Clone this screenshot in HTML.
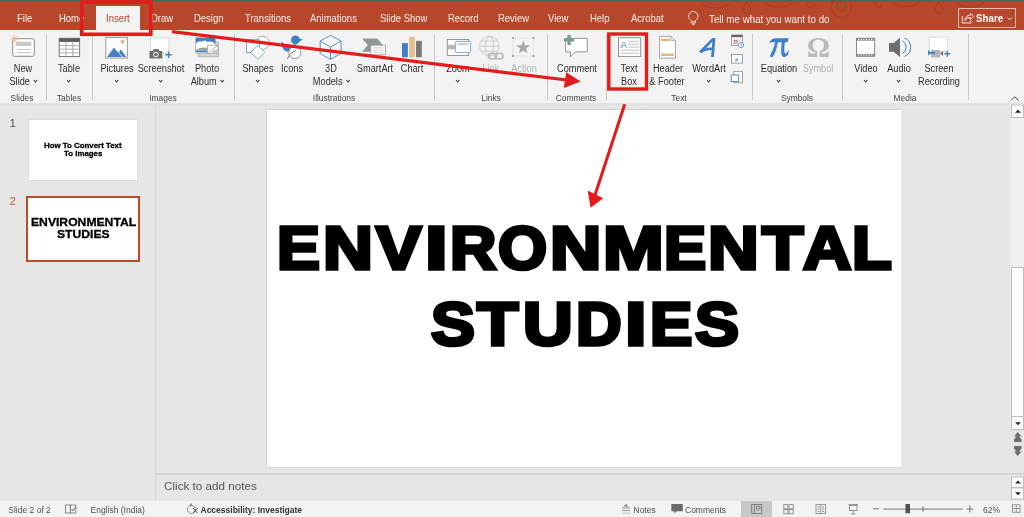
<!DOCTYPE html>
<html><head><meta charset="utf-8">
<style>
*{margin:0;padding:0;box-sizing:border-box}
html,body{width:1024px;height:517px;overflow:hidden;-webkit-font-smoothing:antialiased;background:#e6e6e6;font-family:"Liberation Sans",sans-serif}
.a{position:absolute}
#green{left:0;top:0;width:1024px;height:2px;background:#44714d}
#title{left:0;top:2px;width:1024px;height:28px;background:#b7472a}
.tab{position:absolute;top:14px;font-size:10.2px;color:#fbeee9;white-space:nowrap;line-height:10px;transform:scaleX(0.93);transform-origin:0 0}
#ribbon{left:0;top:30px;width:1024px;height:73px;background:#f3f3f3}
#rbline{left:0;top:103px;width:1024px;height:2px;background:#e1e1e1}
.lbl{position:absolute;width:100px;font-size:10px;transform:scaleX(0.92);transform-origin:50% 0;color:#2c2c2c;white-space:nowrap;line-height:12px;text-align:center}
.grp{position:absolute;top:92.5px;width:100px;text-align:center;font-size:9px;transform:scaleX(0.93);transform-origin:50% 0;color:#444;white-space:nowrap;line-height:10px}
.sep{position:absolute;top:34px;width:1px;height:66px;background:#c9c9c9}
.dis{color:#b0b0b0}
.ch{display:inline-block;width:3.2px;height:3.2px;border-right:1px solid #2c2c2c;border-bottom:1px solid #2c2c2c;transform:rotate(45deg);margin-left:4px;position:relative;top:-3px}
.chonly .ch{margin-left:0}
#panelsep{left:155px;top:105px;width:1px;height:396px;background:#d8d8d8}
.bl{position:absolute;font-family:"Liberation Sans",sans-serif;font-weight:bold;font-size:60px;line-height:80px;color:#000;-webkit-text-stroke:3.5px #000;transform-origin:0 0;white-space:nowrap}
.tl{font-weight:bold;color:#000;white-space:nowrap;transform-origin:0 0;-webkit-text-stroke:0.3px #000}
.thumb{position:absolute;background:#fff;text-align:center;font-weight:bold;color:#000}
#slide{left:267px;top:110px;width:634px;height:357px;background:#fff;box-shadow:-1px -1px 0 #d2d2d2,0 1px 0 #d8d8d8}
#notesline{left:156px;top:473px;width:868px;height:2px;background:#d4d4d4}
#status{left:0;top:501px;width:1024px;height:16px;background:#f3f3f3}
.st{position:absolute;top:504.8px;font-size:8.5px;color:#505050;white-space:nowrap;line-height:10px}
</style></head><body><div style="position:absolute;left:0;top:0;width:1024px;height:517px;will-change:transform">
<div id="green" class="a"></div>
<div id="title" class="a"></div>
<!-- tabs -->
<div class="tab" style="left:17px">File</div>
<div class="tab" style="left:59px">Home</div>
<div class="a" style="left:96px;top:6px;width:44px;height:24px;background:#f3f3f3"></div>
<div class="tab" style="left:105.5px;color:#b7472a">Insert</div>
<div class="tab" style="left:151px">Draw</div>
<div class="tab" style="left:194px">Design</div>
<div class="tab" style="left:245px">Transitions</div>
<div class="tab" style="left:310px">Animations</div>
<div class="tab" style="left:380px">Slide Show</div>
<div class="tab" style="left:447.5px">Record</div>
<div class="tab" style="left:498px">Review</div>
<div class="tab" style="left:548px">View</div>
<div class="tab" style="left:589.5px">Help</div>
<div class="tab" style="left:630.5px">Acrobat</div>
<div class="tab" style="left:708.5px;font-size:10.5px">Tell me what you want to do</div>
<!-- share -->
<div class="a" style="left:958px;top:8px;width:58px;height:20px;border:1px solid #e9b9ab"></div>
<div class="tab" style="left:975.5px;font-weight:bold;font-size:10.5px;color:#fff;top:12.5px;transform:scaleX(0.93);transform-origin:0 0">Share</div>

<div id="ribbon" class="a"></div>
<div id="rbline" class="a"></div>

<svg class="a" style="left:0;top:0;z-index:5" width="1024" height="110" viewBox="0 0 1024 110">
<!-- New slide -->
<rect x="12.7" y="38.7" width="21.6" height="17.6" rx="2" fill="#fff" stroke="#8a8a8a" stroke-width="1"/>
<rect x="15.7" y="41.7" width="15.6" height="4.3" fill="#c8c8c8"/>
<line x1="17" y1="49.5" x2="31" y2="49.5" stroke="#c8c8c8" stroke-width="1"/>
<line x1="17" y1="52.5" x2="31" y2="52.5" stroke="#c8c8c8" stroke-width="1"/>
<g stroke="#f0b98a" stroke-width="0.8"><line x1="14.2" y1="34.6" x2="14.2" y2="37.4"/><line x1="14.2" y1="40.6" x2="14.2" y2="43.4"/><line x1="9.8" y1="39" x2="12.6" y2="39"/><line x1="15.8" y1="39" x2="18.6" y2="39"/><line x1="11.1" y1="35.9" x2="13" y2="37.8"/><line x1="15.4" y1="40.2" x2="17.3" y2="42.1"/><line x1="17.3" y1="35.9" x2="15.4" y2="37.8"/><line x1="13" y1="40.2" x2="11.1" y2="42.1"/></g>
<circle cx="14.2" cy="39" r="1.6" fill="none" stroke="#f0b98a" stroke-width="0.8"/>
<!-- Table -->
<rect x="59.2" y="38.3" width="20.4" height="18.2" fill="#fff" stroke="#7a7a7a" stroke-width="1"/>
<rect x="59.2" y="38.3" width="20.4" height="3.6" fill="#5a5a5a"/>
<g stroke="#9a9a9a" stroke-width="0.8"><line x1="66" y1="42" x2="66" y2="56.5"/><line x1="72.8" y1="42" x2="72.8" y2="56.5"/><line x1="59.2" y1="45.6" x2="79.6" y2="45.6"/><line x1="59.2" y1="49.2" x2="79.6" y2="49.2"/><line x1="59.2" y1="52.8" x2="79.6" y2="52.8"/></g>
<!-- Pictures -->
<rect x="105.8" y="37.5" width="21.6" height="20.6" fill="#fff" stroke="#9a9a9a" stroke-width="1"/>
<path d="M107 57 L114 47.5 L118.5 52.5 L121 49.5 L126.3 57 Z" fill="#4a80bf"/>
<path d="M115.5 49 L122.5 57" stroke="#fff" stroke-width="0.8"/>
<circle cx="122.6" cy="41.7" r="1.9" fill="#e8b27c"/>
<!-- Screenshot -->
<rect x="150.6" y="37.9" width="18.2" height="15" fill="#fff" stroke="#a8a8a8" stroke-width="0.8" stroke-dasharray="1 1"/>
<path d="M149.5 51 h3 l1.2 -2 h4.6 l1.2 2 h2.8 v7.6 h-12.8 Z" fill="#6e6e6e"/>
<circle cx="155.9" cy="54.6" r="2.3" fill="none" stroke="#fff" stroke-width="1"/>
<path d="M168.6 51.5 v6.5 M165.4 54.8 h6.5" stroke="#3f7fc6" stroke-width="1.4"/>
<!-- Photo Album -->
<rect x="198.3" y="42" width="20.2" height="14.8" fill="#d4d4d4" stroke="#ababab" stroke-width="0.8"/>
<rect x="195.6" y="37.6" width="19.8" height="15.4" fill="#fff" stroke="#a8a8a8" stroke-width="0.8"/>
<rect x="196" y="38" width="19" height="6.8" fill="#3f7fc6"/>
<ellipse cx="199.8" cy="43.4" rx="3" ry="2.2" fill="#fff"/><ellipse cx="204.4" cy="42.6" rx="2.6" ry="2" fill="#fff"/><ellipse cx="209.5" cy="43.6" rx="4.5" ry="2" fill="#fff"/><rect x="196" y="43.5" width="19" height="3" fill="#fff"/>
<path d="M196 49.8 Q202 46.2 208 48 L208 50.6 L196 50.6 Z" fill="#9aa6a2"/>
<rect x="196" y="50.6" width="11.8" height="1.6" fill="#3f7fc6"/>
<rect x="207.6" y="45.2" width="10.4" height="8.4" fill="#fff" stroke="#a8a8a8" stroke-width="0.8"/>
<path d="M210.5 53.4 Q214 49.5 217.6 49.6 V53.4 Z" fill="#c4c4c4"/>
<path d="M208.2 53.3 L217.6 45.6" stroke="#8a8a8a" stroke-width="0.7"/>
<!-- Shapes -->
<circle cx="262.6" cy="42.8" r="6.6" fill="#fff" stroke="#a0a0a0" stroke-width="0.9"/>
<rect x="246.5" y="39.7" width="13" height="12.8" fill="#fff" stroke="#6e9fd6" stroke-width="0.9"/>
<path d="M257.7 45.3 L264.7 52.3 L257.7 59.3 L250.7 52.3 Z" fill="#fff" stroke="#6e9fd6" stroke-width="0.9"/>
<!-- Icons -->
<circle cx="295.4" cy="39.8" r="4.4" fill="#3f7fc6"/>
<path d="M298.5 38.5 L303 39.5 L298.5 42 Z" fill="#3f7fc6"/>
<path d="M281.5 41.5 Q281.5 51.5 288 51.8 Q294 51.5 296 44 Q292 45.5 288 45 Q284 44.5 281.5 41.5 Z" fill="#3f7fc6"/>
<circle cx="294.8" cy="52.6" r="6.1" fill="#fff" stroke="#8a8a8a" stroke-width="0.9"/>
<path d="M287.3 58.8 Q290 52.5 296 50.2" fill="none" stroke="#6a6a6a" stroke-width="0.9"/>
<!-- 3D Models -->
<path d="M330.5 35.3 L341 41 L341 53.5 L330.5 59.3 L320.2 53.5 L320.2 41 Z" fill="#f7f9f9" stroke="#4a80bf" stroke-width="0.9"/>
<path d="M320.2 41 L330.5 47 L341 41 M330.5 47 L330.5 59.3" fill="none" stroke="#4a80bf" stroke-width="0.9"/>
<!-- SmartArt -->
<path d="M362.2 38.4 h15 l5.6 6.6 l-5.6 6.7 h-15 l5.6 -6.7 Z" fill="#8f9896"/>
<rect x="370.8" y="45.2" width="14.6" height="9.6" fill="#fff" stroke="#9a9a9a" stroke-width="0.8"/>
<g stroke="#c4c4c4" stroke-width="0.8"><line x1="373" y1="47.8" x2="383.5" y2="47.8"/><line x1="373" y1="50.2" x2="383.5" y2="50.2"/><line x1="373" y1="52.6" x2="383.5" y2="52.6"/></g>
<!-- Chart -->
<rect x="402" y="43.1" width="5.9" height="14.2" fill="#3f7fc6"/>
<rect x="409" y="36.9" width="5.9" height="20.4" fill="#ebbd8e"/>
<rect x="416" y="40.9" width="5.8" height="16.4" fill="#7b7b7b"/>
<!-- Zoom -->
<rect x="447.3" y="39.5" width="21.3" height="16" fill="#fff" stroke="#8a8a8a" stroke-width="0.9"/>
<rect x="448" y="44.8" width="7.5" height="4.5" fill="#b9b9b9"/>
<rect x="455.3" y="41.4" width="15.3" height="11.2" rx="1.2" fill="#fff" stroke="#6e9fd6" stroke-width="0.9"/>
<rect x="457.5" y="43.2" width="11" height="1.8" fill="#c8c8c8"/>
<!-- Link -->
<g fill="none" stroke="#c4c4c4" stroke-width="0.8"><circle cx="489.3" cy="46.1" r="9.8"/><ellipse cx="489.3" cy="46.1" rx="4.2" ry="9.8"/><line x1="479.5" y1="46.1" x2="499.1" y2="46.1"/><line x1="481" y1="41" x2="497.6" y2="41"/><line x1="481" y1="51.2" x2="497.6" y2="51.2"/></g>
<g fill="none" stroke="#bdbdbd" stroke-width="1.8"><rect x="488.5" y="53.3" width="8" height="5.5" rx="2.7"/><rect x="495" y="53.3" width="8" height="5.5" rx="2.7"/></g>
<!-- Action -->
<rect x="513" y="38" width="20.4" height="18" fill="none" stroke="#b8b8b8" stroke-width="0.6" stroke-dasharray="1 1"/>
<g fill="#a8a8a8"><rect x="512" y="37" width="2" height="2"/><rect x="532.5" y="37" width="2" height="2"/><rect x="512" y="55" width="2" height="2"/><rect x="532.5" y="55" width="2" height="2"/></g>
<path d="M523.2 40.3 L525 45.2 L530.2 45.3 L526.1 48.5 L527.5 53.5 L523.2 50.6 L518.9 53.5 L520.3 48.5 L516.2 45.3 L521.4 45.2 Z" fill="#a8a8a8"/>
<!-- Comment -->
<path d="M565.6 38.4 h21.6 v13.5 h-12 l-4.7 5 v-5 h-4.9 Z" fill="#fff" stroke="#8a8a8a" stroke-width="0.9" stroke-linejoin="round"/>
<path d="M569.1 34.8 v10.2 M564 39.9 h10.2" stroke="#7f9a96" stroke-width="3.4"/>
<!-- Text Box -->
<rect x="618.5" y="37.8" width="22.2" height="18.6" fill="#fff" stroke="#8a8a8a" stroke-width="0.9"/>
<text x="620.5" y="47.8" font-family="Liberation Sans" font-size="9.8" fill="#3f7fc6">A</text>
<g stroke="#b0b0b0" stroke-width="0.8"><line x1="628" y1="41.3" x2="639" y2="41.3"/><line x1="628" y1="44.2" x2="639" y2="44.2"/><line x1="628" y1="47.1" x2="639" y2="47.1"/><line x1="620.5" y1="50.2" x2="639" y2="50.2"/><line x1="620.5" y1="53.2" x2="639" y2="53.2"/></g>
<!-- Header Footer -->
<path d="M659.6 36.4 h11.5 l4.3 4.3 v17.5 h-15.8 Z" fill="#fff" stroke="#9a9a9a" stroke-width="0.9"/>
<path d="M671.1 36.4 v4.3 h4.3" fill="none" stroke="#9a9a9a" stroke-width="0.8"/>
<rect x="661" y="38.8" width="9" height="2.3" fill="#e8b27c"/>
<rect x="661" y="53.6" width="13" height="2.3" fill="#e8b27c"/>
<!-- WordArt -->
<path d="M712.2 38 L715.4 38.2 L701.8 53 L699 51.4 Z" fill="#3f7fc6"/>
<path d="M699.2 51.3 Q706 46.8 714.2 47.8 L714 50 Q706.5 49.4 701 53.2 Z" fill="#3f7fc6"/>
<path d="M712.6 38 L715.4 38 L713.9 57 L711.1 57 Z" fill="#3f7fc6"/>
<!-- small text icons -->
<rect x="731.5" y="35" width="11" height="10.5" fill="#fff" stroke="#8a8a8a" stroke-width="0.8"/>
<rect x="731.5" y="35" width="11" height="2.2" fill="#666"/>
<g stroke="#cfcfcf" stroke-width="0.5"><line x1="734.2" y1="37.5" x2="734.2" y2="45.5"/><line x1="737" y1="37.5" x2="737" y2="45.5"/><line x1="739.8" y1="37.5" x2="739.8" y2="42"/><line x1="731.5" y1="40.3" x2="742.5" y2="40.3"/><line x1="731.5" y1="43" x2="738" y2="43"/></g><rect x="734.2" y="40.3" width="2.8" height="2.7" fill="none" stroke="#e05050" stroke-width="0.8"/>
<circle cx="741" cy="45" r="2.6" fill="#fff" stroke="#3f7fc6" stroke-width="0.8"/><path d="M741 43.6 v1.5 h1.2" fill="none" stroke="#555" stroke-width="0.6"/>
<rect x="731.5" y="54.5" width="11" height="8.6" fill="#fff" stroke="#8a8a8a" stroke-width="0.8"/>
<text x="735" y="61.5" font-family="Liberation Sans" font-size="6" fill="#3f7fc6">#</text>
<rect x="734" y="71.3" width="8.5" height="11.5" fill="#fff" stroke="#8a8a8a" stroke-width="0.8"/>
<rect x="731.2" y="75" width="7.5" height="6.5" fill="#fff" stroke="#3f7fc6" stroke-width="0.9"/>
<!-- Equation / Symbol -->
<path d="M769.2 43.2 Q770.8 38.3 776 38.3 L788.6 38.3 L787.6 42.2 L772 42.2 Q770.5 42.2 769.2 43.2 Z" fill="#3f7fc6"/>
<path d="M775.2 42 L778 42 Q776.6 50 773.4 56.2 Q772 57.6 770.6 56.9 Q769.6 56 770.8 54 Q774 48.5 775.2 42 Z" fill="#3f7fc6"/>
<path d="M781.8 42 L784.8 42 Q784 48 784.4 52 Q784.8 54.2 786.4 53.4 Q787.6 52.4 788.2 50.6 L788.8 51 Q788.2 56.8 784.2 57.1 Q781.2 57.1 781.2 52 Q781.2 47 781.8 42 Z" fill="#3f7fc6"/>
<text x="806.8" y="56.6" font-family="Liberation Serif" font-size="30" font-weight="bold" fill="#b9b9b9" transform="translate(806.8 0) scale(0.97 1) translate(-806.8 0)">Ω</text>
<!-- Video -->
<rect x="856.5" y="38.3" width="18.2" height="18" fill="#fff" stroke="#7a7a7a" stroke-width="0.9"/>
<rect x="856.5" y="38.3" width="18.2" height="2.4" fill="#8a8a8a"/>
<rect x="856.5" y="53.9" width="18.2" height="2.4" fill="#8a8a8a"/>
<g fill="#fff"><rect x="858" y="39.1" width="1.2" height="1"/><rect x="860.6" y="39.1" width="1.2" height="1"/><rect x="863.2" y="39.1" width="1.2" height="1"/><rect x="865.8" y="39.1" width="1.2" height="1"/><rect x="868.4" y="39.1" width="1.2" height="1"/><rect x="871" y="39.1" width="1.2" height="1"/><rect x="858" y="54.5" width="1.2" height="1"/><rect x="860.6" y="54.5" width="1.2" height="1"/><rect x="863.2" y="54.5" width="1.2" height="1"/><rect x="865.8" y="54.5" width="1.2" height="1"/><rect x="868.4" y="54.5" width="1.2" height="1"/><rect x="871" y="54.5" width="1.2" height="1"/></g>
<!-- Audio -->
<path d="M889 43 h4.5 l6.5 -5.3 v19.4 l-6.5 -5.3 h-4.5 Z" fill="#6e6e6e"/>
<path d="M902.3 40.8 A7.2 7.2 0 0 1 902.3 53.6 M904.6 38 A10 10 0 0 1 904.6 56.4" fill="none" stroke="#3f7fc6" stroke-width="1"/>
<!-- Screen Recording -->
<rect x="929.3" y="37.2" width="18" height="14.5" fill="#fff" stroke="#a8a8a8" stroke-width="0.7" stroke-dasharray="1 1"/>
<rect x="931" y="50" width="9" height="7.4" fill="#b5b5b5"/>
<path d="M940 53.5 l3 -2.5 v5 Z" fill="#6e6e6e"/>
<rect x="928" y="51.8" width="7" height="2" fill="#3f7fc6"/><rect x="928" y="50.5" width="1.3" height="4.6" fill="#3f7fc6"/>
<path d="M947.3 50.8 v6 M944.3 53.8 h6" stroke="#3f7fc6" stroke-width="1.4"/>
<!-- collapse ribbon -->
<path d="M1011 100.5 L1014.8 96.7 L1018.6 100.5" fill="none" stroke="#444" stroke-width="1"/>
<!-- lightbulb -->
<path d="M691.4 20.8 C689.6 19.4 688.6 17.8 688.6 16.2 A4.7 4.7 0 0 1 698 16.2 C698 17.8 697 19.4 695.2 20.8 V23.1 H691.4 Z" fill="none" stroke="#fbeee9" stroke-width="0.9"/>
<line x1="691.4" y1="21.6" x2="695.2" y2="21.6" stroke="#fbeee9" stroke-width="0.7"/>
<line x1="692.2" y1="24.6" x2="694.4" y2="24.6" stroke="#fbeee9" stroke-width="0.9"/>
<!-- share icon -->
<path d="M962.3 16 v7 h8.6 v-2.5" fill="none" stroke="#fff" stroke-width="0.9"/>
<path d="M964.8 20.5 q0.5 -5 5.5 -5.2 v-2.2 l3.2 3.2 l-3.2 3.2 v-2 q-3.5 0 -5.5 3 Z" fill="none" stroke="#fff" stroke-width="0.9" stroke-linejoin="round"/>
<path d="M1007.5 17.5 l2.3 2.3 l2.3 -2.3" fill="none" stroke="#fff" stroke-width="0.9"/>
</svg>
<svg class="a" style="left:0;top:0;z-index:1" width="1024" height="30" viewBox="0 0 1024 30">
<g fill="none" stroke="#9c3a22" stroke-width="1" opacity="0.75">
<path d="M701 3 a14 5 0 0 0 28 0"/>
<path d="M747 2 q-5 6 -4 8 a4 3 0 0 0 8 0 q0 -3 -4 -8"/>
<path d="M765 2 a14 5 0 0 0 28 0"/>
<path d="M806 3 q1 5 5 5 q3 0 4 -3"/>
<circle cx="841.5" cy="7.5" r="10"/>
<circle cx="841.5" cy="6" r="5"/>
<path d="M830 3 q2 -3 6 -2"/>
<path d="M875 3 q1 5 4 5 q2 0 2 -3"/>
<path d="M892 1 a13.5 5.5 0 0 0 27 0"/>
<path d="M939 2 q-5 6 -4 8 a4 3 0 0 0 8 0 q0 -3 -4 -8"/>
<path d="M956 1 a14 6 0 0 0 28 0"/>
</g>
</svg>
<svg class="a" style="left:0;top:100px;z-index:4" width="1024" height="417" viewBox="0 100 1024 417">
<!-- vertical scrollbar -->
<rect x="1010.5" y="104" width="13.5" height="326" fill="#f0f0f0"/>
<rect x="1011.5" y="105" width="12" height="12.5" fill="#fff" stroke="#b9bfbf" stroke-width="1"/>
<path d="M1015 112.8 L1018 109.6 L1021 112.8 Z" fill="#222"/>
<rect x="1011.5" y="267.5" width="12" height="149" fill="#fff" stroke="#b9bfbf" stroke-width="1"/>
<rect x="1011.5" y="416.5" width="12" height="13" fill="#fff" stroke="#b9bfbf" stroke-width="1"/>
<path d="M1015 422.2 L1018 425.2 L1021 422.2 Z" fill="#222"/>
<path d="M1017.7 432 L1021.5 436.5 h-2.5 l2.5 3 v2.5 h-7.5 v-2.5 l2.5 -3 h-2.5 Z" fill="#6e6e6e"/>
<path d="M1017.7 456 L1021.5 451.5 h-2.5 l2.5 -3 v-2.5 h-7.5 v2.5 l2.5 3 h-2.5 Z" fill="#6e6e6e"/>
<!-- notes scroll -->
<rect x="1011.5" y="477" width="12" height="10.5" fill="#fff" stroke="#b9bfbf" stroke-width="1"/>
<path d="M1015 483.6 L1018 480.6 L1021 483.6 Z" fill="#222"/>
<rect x="1011.5" y="488" width="12" height="11" fill="#fff" stroke="#b9bfbf" stroke-width="1"/>
<path d="M1015 492.3 L1018 495.3 L1021 492.3 Z" fill="#222"/>
<!-- status icons -->
<rect x="65.5" y="505" width="4.8" height="8" fill="none" stroke="#777" stroke-width="0.8"/>
<rect x="70.3" y="505" width="5.5" height="8" fill="none" stroke="#777" stroke-width="0.8"/>
<path d="M71.5 509 l1.5 1.8 l3 -4" fill="none" stroke="#555" stroke-width="0.9"/>
<circle cx="191.5" cy="509.5" r="4" fill="none" stroke="#555" stroke-width="0.9" stroke-dasharray="2 1"/>
<path d="M191 503.5 v2.5 M193 508 l4.5 5 M197.5 508 l-4.5 5" stroke="#444" stroke-width="1"/>
<path d="M622 508 h8 M622 510.6 h8" stroke="#888" stroke-width="0.9"/>
<path d="M622 513.2 h8" stroke="#bbb" stroke-width="0.9"/>
<path d="M623.5 506.5 l2.5 -2.5 l2.5 2.5 Z" fill="#777"/>
<path d="M671.3 504 h11.5 v7.2 h-6 l-2.5 2.2 v-2.2 h-3 Z" fill="#6a6a6a"/>
<rect x="741" y="501" width="31" height="16" fill="#c8c8c8"/>
<rect x="751.7" y="504.5" width="10" height="9" fill="none" stroke="#7a7a7a" stroke-width="0.9"/>
<path d="M754.5 504.5 v9" stroke="#7a7a7a" stroke-width="0.9"/>
<rect x="756.5" y="506.5" width="3.5" height="2.5" fill="none" stroke="#7a7a7a" stroke-width="0.8"/>
<g fill="none" stroke="#8a8a8a" stroke-width="0.9"><rect x="783.8" y="504.6" width="4.2" height="4.2"/><rect x="789" y="504.6" width="4.2" height="4.2"/><rect x="783.8" y="509.6" width="4.2" height="4.2"/><rect x="789" y="509.6" width="4.2" height="4.2"/></g>
<g fill="none" stroke="#8a8a8a" stroke-width="0.9"><rect x="816" y="504.6" width="9.5" height="9"/><path d="M820.75 504.6 v9.5 M817.5 507 h2 M817.5 509.2 h2 M817.5 511.4 h2 M822 507 h2 M822 509.2 h2 M822 511.4 h2"/></g>
<g fill="none" stroke="#8a8a8a" stroke-width="0.9"><path d="M848.5 504.6 h9.5"/><rect x="849.5" y="505.5" width="7.5" height="5"/><path d="M853.2 510.5 v3.5 M851 514 h4.5"/></g>
<!-- zoom slider -->
<path d="M873 508.8 h6" stroke="#666" stroke-width="0.9"/>
<rect x="883.5" y="508.5" width="79" height="1.2" fill="#8a8a8a"/>
<rect x="922.5" y="506.5" width="1" height="5" fill="#666"/>
<rect x="905.5" y="504" width="4.5" height="9.2" fill="#505050"/>
<path d="M966.5 509 h6.8 M969.9 505.6 v6.8" stroke="#666" stroke-width="0.9"/>
<g fill="none" stroke="#888" stroke-width="0.9"><rect x="1012.5" y="504.8" width="7.5" height="7.5"/><path d="M1016.25 504.8 v7.5 M1012.5 508.55 h7.5"/></g>
</svg>
<!-- ribbon labels -->
<div class="lbl" style="left:-26.65px;top:63px">New</div>
<div class="lbl" style="left:-27.35px;top:76px">Slide<i class="ch"></i></div>
<div class="lbl" style="left:19.40px;top:63px">Table</div>
<div class="lbl chonly" style="left:19.40px;top:76px"><i class="ch"></i></div>
<div class="lbl" style="left:67.25px;top:63px">Pictures</div>
<div class="lbl chonly" style="left:67.25px;top:76px"><i class="ch"></i></div>
<div class="lbl" style="left:110.90px;top:63px">Screenshot</div>
<div class="lbl chonly" style="left:110.90px;top:76px"><i class="ch"></i></div>
<div class="lbl" style="left:157.00px;top:63px">Photo</div>
<div class="lbl" style="left:156.50px;top:76px">Album<i class="ch"></i></div>
<div class="lbl" style="left:207.85px;top:63px">Shapes</div>
<div class="lbl chonly" style="left:207.85px;top:76px"><i class="ch"></i></div>
<div class="lbl" style="left:242.00px;top:63px">Icons</div>
<div class="lbl" style="left:280.50px;top:63px">3D</div>
<div class="lbl" style="left:280.60px;top:76px">Models<i class="ch"></i></div>
<div class="lbl" style="left:324.50px;top:63px">SmartArt</div>
<div class="lbl" style="left:362.00px;top:63px">Chart</div>
<div class="lbl" style="left:407.50px;top:63px">Zoom</div>
<div class="lbl chonly" style="left:407.50px;top:76px"><i class="ch"></i></div>
<div class="lbl dis" style="left:440.70px;top:63px">Link</div>
<div class="lbl dis" style="left:473.75px;top:63px">Action</div>
<div class="lbl" style="left:526.60px;top:63px">Comment</div>
<div class="lbl" style="left:579.40px;top:63px">Text</div>
<div class="lbl" style="left:579.40px;top:76px">Box</div>
<div class="lbl" style="left:617.70px;top:63px">Header</div>
<div class="lbl" style="left:617.35px;top:76px">&amp; Footer</div>
<div class="lbl" style="left:658.70px;top:63px">WordArt</div>
<div class="lbl chonly" style="left:658.70px;top:76px"><i class="ch"></i></div>
<div class="lbl" style="left:729.45px;top:63px">Equation</div>
<div class="lbl chonly" style="left:729.45px;top:76px"><i class="ch"></i></div>
<div class="lbl dis" style="left:768.40px;top:63px">Symbol</div>
<div class="lbl" style="left:815.85px;top:63px">Video</div>
<div class="lbl chonly" style="left:815.85px;top:76px"><i class="ch"></i></div>
<div class="lbl" style="left:848.95px;top:63px">Audio</div>
<div class="lbl chonly" style="left:848.95px;top:76px"><i class="ch"></i></div>
<div class="lbl" style="left:889.30px;top:63px">Screen</div>
<div class="lbl" style="left:889.30px;top:76px">Recording</div>
<div class="grp" style="left:-27.60px">Slides</div>
<div class="grp" style="left:19.00px">Tables</div>
<div class="grp" style="left:112.80px">Images</div>
<div class="grp" style="left:283.80px">Illustrations</div>
<div class="grp" style="left:440.70px">Links</div>
<div class="grp" style="left:525.75px">Comments</div>
<div class="grp" style="left:628.65px">Text</div>
<div class="grp" style="left:746.85px">Symbols</div>
<div class="grp" style="left:855.15px">Media</div>
<div class="sep" style="left:46px"></div>
<div class="sep" style="left:92px"></div>
<div class="sep" style="left:234px"></div>
<div class="sep" style="left:434px"></div>
<div class="sep" style="left:546.5px"></div>
<div class="sep" style="left:606px"></div>
<div class="sep" style="left:752px"></div>
<div class="sep" style="left:842px"></div>
<div class="sep" style="left:968px"></div>


<!-- slide panel -->
<div class="a" style="left:9.5px;top:116.5px;font-size:11.5px;line-height:12px;color:#555">1</div>
<div class="thumb" style="left:28px;top:119px;width:110px;height:62px;border:1px solid #dcdcdc"></div>
<div class="a" style="left:9.5px;top:194.5px;font-size:11.5px;line-height:12px;color:#c8553a">2</div>
<div class="thumb" style="left:26px;top:196px;width:114px;height:66px;border:2px solid #c0492b"></div>
<div id="panelsep" class="a"></div>
<div class="a tl" style="left:44px;top:141.7px;font-size:7.8px;line-height:8px;transform:scaleX(1.01)">How To Convert Text</div>
<div class="a tl" style="left:64px;top:149.7px;font-size:7.8px;line-height:8px;transform:scaleX(1.01)">To Images</div>
<div class="a tl" style="left:30.5px;top:216.5px;font-size:11px;line-height:11px;transform:scaleX(1.105)">ENVIRONMENTAL</div>
<div class="a tl" style="left:57px;top:229px;font-size:11px;line-height:11px;transform:scaleX(1.105)">STUDIES</div>

<div id="slide" class="a"></div>
<div class="bl" style="left:277.2px;top:207.8px;transform:scale(1.073,1.018)">E</div>
<div class="bl" style="left:322.5px;top:207.8px;transform:scale(1.153,1.018)">N</div>
<div class="bl" style="left:375.9px;top:207.8px;transform:scale(1.134,1.018)">V</div>
<div class="bl" style="left:424.6px;top:207.8px;transform:scale(1.358,1.018)">I</div>
<div class="bl" style="left:449.7px;top:207.8px;transform:scale(1.070,1.018)">R</div>
<div class="bl" style="left:498.1px;top:207.8px;transform:scale(1.053,1.018)">O</div>
<div class="bl" style="left:550.0px;top:207.8px;transform:scale(1.185,1.018)">N</div>
<div class="bl" style="left:602.5px;top:207.8px;transform:scale(1.215,1.018)">M</div>
<div class="bl" style="left:663.9px;top:207.8px;transform:scale(1.054,1.018)">E</div>
<div class="bl" style="left:708.2px;top:207.8px;transform:scale(1.172,1.018)">N</div>
<div class="bl" style="left:761.9px;top:207.8px;transform:scale(1.128,1.018)">T</div>
<div class="bl" style="left:802.9px;top:207.8px;transform:scale(1.116,1.018)">A</div>
<div class="bl" style="left:851.8px;top:207.8px;transform:scale(1.086,1.018)">L</div>
<div class="bl" style="left:430.9px;top:284.1px;transform:scale(1.097,1.018)">S</div>
<div class="bl" style="left:476.9px;top:284.1px;transform:scale(1.127,1.018)">T</div>
<div class="bl" style="left:522.7px;top:284.1px;transform:scale(1.147,1.018)">U</div>
<div class="bl" style="left:576.0px;top:284.1px;transform:scale(1.054,1.018)">D</div>
<div class="bl" style="left:624.9px;top:284.1px;transform:scale(1.292,1.018)">I</div>
<div class="bl" style="left:649.6px;top:284.1px;transform:scale(1.059,1.018)">E</div>
<div class="bl" style="left:694.7px;top:284.1px;transform:scale(1.100,1.018)">S</div>

<div id="notesline" class="a"></div>
<div class="a" style="left:164px;top:479px;font-size:11.7px;color:#555;white-space:nowrap">Click to add notes</div>

<div id="status" class="a"></div>
<div class="st" style="left:8.3px">Slide 2 of 2</div>
<div class="st" style="left:90.5px">English (India)</div>
<div class="st" style="left:200.5px;font-weight:bold;color:#333">Accessibility: Investigate</div>
<div class="st" style="left:633.5px">Notes</div>
<div class="st" style="left:685px">Comments</div>
<div class="st" style="left:983px">62%</div>
<svg class="a" style="left:0;top:0;z-index:50" width="1024" height="517" viewBox="0 0 1024 517">
<rect x="81.7" y="1.9" width="69.1" height="32.4" fill="none" stroke="#e31b1b" stroke-width="3.6"/>
<rect x="608.8" y="34" width="37.7" height="55" fill="none" stroke="#e31b1b" stroke-width="3.4"/>
<line x1="172" y1="31.6" x2="567" y2="80" stroke="#e31b1b" stroke-width="3.2"/>
<polygon points="580.6,81.6 566.2,72.3 563.8,87.9" fill="#e31b1b"/>
<line x1="624.7" y1="104.3" x2="595" y2="195" stroke="#e31b1b" stroke-width="3"/>
<polygon points="590.6,207.7 587.6,190.6 603.2,198.2" fill="#e31b1b"/>
</svg>
</div></body></html>
